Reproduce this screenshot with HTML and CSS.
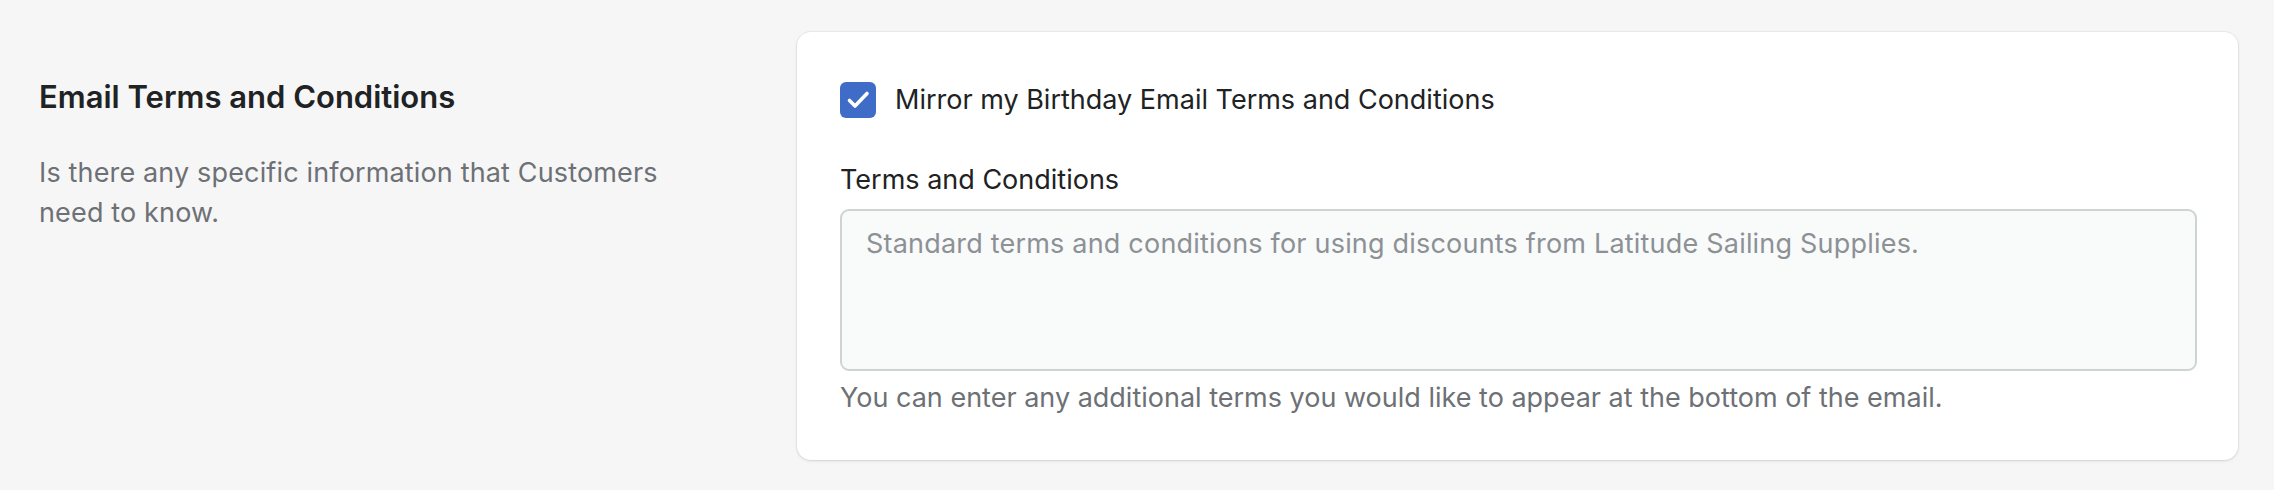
FILE: index.html
```html
<!DOCTYPE html>
<html lang="en">
<head>
    <meta charset="UTF-8">
    <meta name="viewport" content="width=device-width, initial-scale=1.0">
    <title>Email Terms and Conditions</title>
    <link rel="stylesheet" href="styles.css">
</head>
<body>
    <!-- section: left intro + right card -->
    <div class="section">
        <div class="intro">
            <h2 class="intro-title">Email Terms and Conditions</h2>
            <p class="intro-text">Is there any specific information that Customers need to know.</p>
        </div>

        <div class="card">
            <label class="check-row">
                <span class="check-box">
                    <svg width="36" height="36" viewBox="0 0 36 36">
                        <path d="M9.5 18.5 L15 24 L27 11.5" fill="none" stroke="#fff" stroke-width="3.6" stroke-linecap="round" stroke-linejoin="round"/>
                    </svg>
                </span>
                <span class="check-label">Mirror my Birthday Email Terms and Conditions</span>
            </label>

            <div class="field">
                <div class="field-label">Terms and Conditions</div>
                <textarea class="field-input" placeholder="Standard terms and conditions for using discounts from Latitude Sailing Supplies."></textarea>
                <div class="field-help">You can enter any additional terms you would like to appear at the bottom of the email.</div>
            </div>
        </div>
    </div>
</body>
</html>
```

FILE: styles.css
```css
* {
    margin: 0;
    padding: 0;
    box-sizing: border-box;
}

body {
    background-color: #f6f6f7;
    font-family: Inter, "Noto Sans", sans-serif;
    font-size: 27px;
    color: #202223;
}

.section {
    display: flex;
    gap: 78px;
    padding: 32px 36px 30px 39px;
}

/* left column */
.intro {
    flex: 0 0 680px;
    padding-top: 47px;
}

.intro-title {
    font-size: 31px;
    line-height: 36px;
    font-weight: 600;
    color: #202223;
}

.intro-text {
    margin-top: 38px;
    line-height: 40px;
    letter-spacing: 0.15px;
    color: #6d7175;
}

/* card */
.card {
    flex: 1;
    background-color: #fff;
    border-radius: 14px;
    padding: 50px 41px 44px 43px;
    box-shadow: 0 0 0 1px rgba(63, 63, 68, 0.05), 0 1px 3px rgba(63, 63, 68, 0.15);
}

.check-row {
    display: flex;
    align-items: center;
    gap: 19px;
}

.check-box {
    width: 36px;
    height: 36px;
    border-radius: 6px;
    background-color: #3e6cc6;
    display: flex;
}

.check-label {
    line-height: 36px;
}

.field {
    margin-top: 44px;
}

.field-label {
    line-height: 36px;
}

.field-input {
    display: block;
    width: 100%;
    height: 162px;
    margin-top: 11px;
    padding: 13px 24px;
    border: 2px solid #d0d3d6;
    border-radius: 9px;
    background-color: #f9fafa;
    font: inherit;
    line-height: 40px;
    letter-spacing: 0.2px;
    color: #202223;
    resize: none;
    outline: none;
}

.field-input::placeholder {
    color: #8c9196;
}

.field-help {
    margin-top: 9px;
    line-height: 36px;
    color: #6d7175;
}
```
